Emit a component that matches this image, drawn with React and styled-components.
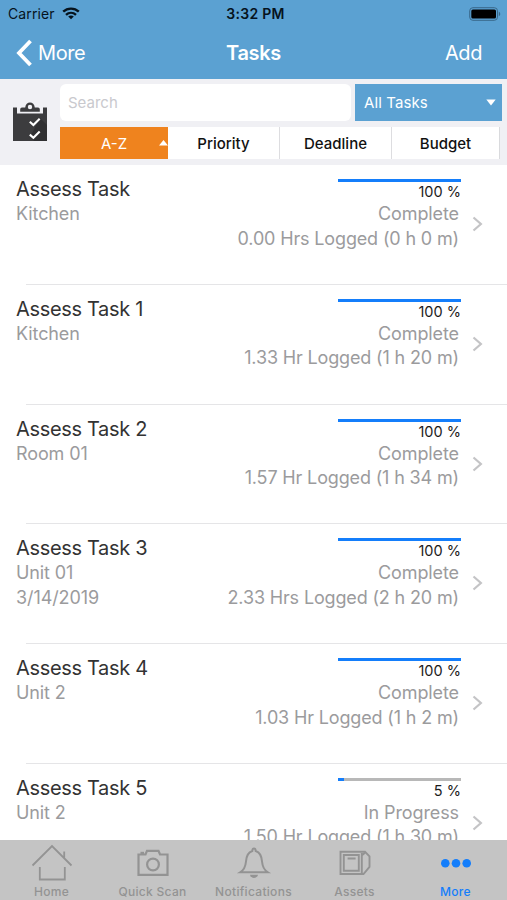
import { useState } from "react"
import styled, { createGlobalStyle } from 'styled-components';


const tasks = [
    { name: "Assess Task", place: "Kitchen", percent: 100, status: "Complete", logged: "0.00 Hrs Logged (0 h 0 m)" },
    { name: "Assess Task 1", place: "Kitchen", percent: 100, status: "Complete", logged: "1.33 Hr Logged (1 h 20 m)" },
    { name: "Assess Task 2", place: "Room 01", percent: 100, status: "Complete", logged: "1.57 Hr Logged (1 h 34 m)" },
    { name: "Assess Task 3", place: "Unit 01", date: "3/14/2019", percent: 100, status: "Complete", logged: "2.33 Hrs Logged (2 h 20 m)" },
    { name: "Assess Task 4", place: "Unit 2", percent: 100, status: "Complete", logged: "1.03 Hr Logged (1 h 2 m)" },
    { name: "Assess Task 5", place: "Unit 2", percent: 5, status: "In Progress", logged: "1.50 Hr Logged (1 h 30 m)" },
]

const sorts = ["A-Z", "Priority", "Deadline", "Budget"]


//ICONS
function WifiIcon(){
    return(
        <svg width="18" height="13" viewBox="0 0 18 13" fill="none" stroke="#06131d" strokeWidth="2.4">
            <path d="M1.2 4.7C5.6.6 12.4.6 16.8 4.7"/>
            <path d="M4 7.8c2.9-2.6 7.1-2.6 10 0"/>
            <path d="M9 12.3 6.2 9.6c1.6-1.4 4-1.4 5.6 0z" fill="#06131d" stroke="none"/>
        </svg>
    )
}

function BatteryIcon(){
    return(
        <svg width="32" height="14" viewBox="0 0 32 14">
            <rect x="0.7" y="0.7" width="27.8" height="12.6" rx="3.2" fill="none" stroke="#39688a"/>
            <rect x="2.3" y="2.4" width="24.7" height="9.2" rx="1.6" fill="#000"/>
            <path d="M29.8 4.8c1.9.7 1.9 3.7 0 4.4z" fill="#39688a"/>
        </svg>
    )
}

function ClipboardIcon(){
    return(
        <svg width="34" height="40" viewBox="0 0 34 40">
            <path d="M0 5.5h4v6h26v-6h4V39H0z" fill="#3c3c3e"/>
            <path d="M27 16l7 7v16H21l-4-4z" fill="#303032"/>
            <path d="M7.2 9.8V7.2Q7.2 5.500 9 5.500h3.200C12.600 2.300 14.500.5 17 .5s4.400 1.800 4.800 5H25q1.800 0 1.800 1.700v2.600z" fill="#3c3c3e"/>
            <circle cx="17" cy="5" r="2.200" fill="#f0f0f4"/>
            <path d="M16.800 19.800l3.600 3.200 6.300-6.200M16.800 32.600l3.600 3.200 6.300-6.200" fill="none" stroke="#fff" strokeWidth="2.100"/>
        </svg>
    )
}

function HomeIcon(){
    return(
        <svg width="42" height="38" viewBox="0 0 42 38" fill="none" stroke="currentColor" strokeWidth="1.800">
            <path d="M1.500 22.500 21 3l19.500 19.500M33.200 15V8.500M8.800 24v12.500h25V24"/>
        </svg>
    )
}

function CameraIcon(){
    return(
        <svg width="42" height="38" viewBox="0 0 42 38" fill="none" stroke="currentColor" strokeWidth="2.200">
            <path d="M6.500 11.500h7l1.500-3.600h11.500l1.500 3.600h7.500v20.300h-29z"/>
            <circle cx="21" cy="21.500" r="5.900"/>
            <path d="M8.500 9.900h3.500"/>
        </svg>
    )
}

function BellIcon(){
    return(
        <svg width="42" height="38" viewBox="0 0 42 38" fill="none" stroke="currentColor" strokeWidth="2">
            <path d="M7.200 29.300h27.600c-4-2.600-5.300-5.300-5.700-10.300C28.700 12.500 26 9 22.700 8c-.1-1.700-.8-2.400-1.700-2.400s-1.600.7-1.700 2.400C16 9 13.300 12.500 12.900 19c-.4 5-1.700 7.700-5.700 10.300z"/>
            <path d="M17 31.800h8c-.8 4.200-7.200 4.200-8 0z" fill="currentColor" stroke="none"/>
        </svg>
    )
}

function AssetsIcon(){
    return(
        <svg width="42" height="38" viewBox="0 0 42 38" fill="none" stroke="currentColor" strokeWidth="1.900">
            <path d="M6.500 8.800h24.500l4.500 4.500v10.500L29.500 31h-23z"/>
            <path d="M27.800 10v20M28 12.300l3-2.500M9.800 12h15v15.800h-15z"/>
            <path d="M13.600 15.500h8" strokeWidth="2"/>
        </svg>
    )
}

function DotsIcon(){
    return(
        <svg width="42" height="38" viewBox="0 0 42 38" fill="currentColor">
            <circle cx="10.300" cy="20.300" r="4.300"/>
            <circle cx="21" cy="20.300" r="4.300"/>
            <circle cx="31.700" cy="20.300" r="4.300"/>
        </svg>
    )
}

const tabs = [
    { label: "Home", Icon: HomeIcon },
    { label: "Quick Scan", Icon: CameraIcon },
    { label: "Notifications", Icon: BellIcon },
    { label: "Assets", Icon: AssetsIcon },
    { label: "More", Icon: DotsIcon },
]


function TaskRow({ task }){
    return(
        <Row>
            <Info>
                <TaskName>{task.name}</TaskName>
                <Detail>{task.place}</Detail>
                {task.date && <Detail>{task.date}</Detail>}
            </Info>
            <Progress>
                <Track><Fill style={{width: task.percent + "%"}}/></Track>
                <Percent>{task.percent} %</Percent>
                <Detail>{task.status}</Detail>
                <Logged>{task.logged}</Logged>
            </Progress>
            <RowArrow width="11" height="18" viewBox="0 0 11 18" fill="none" stroke="#c4c4c6" strokeWidth="2.200">
                <path d="M1.500 2.500 8.900 9l-7.400 6.500"/>
            </RowArrow>
        </Row>
    )
}


export default function App(){

    const [sort, setSort] = useState("A-Z")
    const [activeTab, setActiveTab] = useState("More")

    return(
        <>
        <GlobalStyle/>
        <Screen>
            <StatusBar>
                <Carrier>Carrier <WifiIcon/></Carrier>
                <Clock>3:32 PM</Clock>
                <BatteryIcon/>
            </StatusBar>
            <NavBar>
                <BackButton>
                    <svg width="17" height="28" viewBox="0 0 17 28" fill="none" stroke="#fff" strokeWidth="3.800">
                        <path d="M14.500 2 3 14l11.500 12"/>
                    </svg>
                    More
                </BackButton>
                <Title>Tasks</Title>
                <AddButton>Add</AddButton>
            </NavBar>
            <Filters>
                <ClipboardIcon/>
                <Controls>
                    <SearchRow>
                        <Search placeholder="Search"/>
                        <Select>
                            All Tasks
                            <svg width="10" height="7" viewBox="0 0 10 7"><path d="M.3.500h9.400L5 6.500z" fill="#fff"/></svg>
                        </Select>
                    </SearchRow>
                    <SortRow>
                        {sorts.map((name) => (
                            <SortButton key={name} $active={name === sort} onClick={() => setSort(name)}>
                                {name}
                                {name === sort && <SortArrow width="9" height="6" viewBox="0 0 9 6"><path d="M0 5.500h9L4.500 0z" fill="#fff"/></SortArrow>}
                            </SortButton>
                        ))}
                    </SortRow>
                </Controls>
            </Filters>
            <List>
                {tasks.map((task) => <TaskRow key={task.name} task={task}/>)}
            </List>
            <TabBar>
                {tabs.map(({ label, Icon }) => (
                    <Tab key={label} $active={label === activeTab} onClick={() => setActiveTab(label)}>
                        <Icon/>
                        {label}
                    </Tab>
                ))}
            </TabBar>
        </Screen>
        </>
    )
}


const GlobalStyle = createGlobalStyle`
    * {
        box-sizing: border-box;
    }
    body {
        margin: 0;
        background: #fff;
        font-family: Inter, "Liberation Sans", sans-serif;
    }
    button, input {
        font-family: inherit;
        border: 0;
        padding: 0;
        margin: 0;
        background: none;
    }
    svg {
        display: block;
        flex-shrink: 0;
    }
`

const Screen = styled.div`
    width: 507px;
    height: 900px;
    display: flex;
    flex-direction: column;
    overflow: hidden;
`

//HEADER
const StatusBar = styled.div`
    height: 27px;
    flex-shrink: 0;
    background: #5ba1d2;
    display: grid;
    grid-template-columns: 1fr auto 1fr;
    align-items: center;
    padding: 0 6px 0 8px;
    font-size: 14px;
    color: #06131d;
    > :last-child {
        justify-self: end;
    }
`
const Carrier = styled.div`
    display: flex;
    align-items: center;
    gap: 7px;
    letter-spacing: 0.1px;
`
const Clock = styled.div`
    font-weight: 600;
    letter-spacing: 0.3px;
    padding-left: 2px;
`
const NavBar = styled.div`
    height: 52px;
    flex-shrink: 0;
    background: #5ba1d2;
    color: #fff;
    display: grid;
    grid-template-columns: 1fr auto 1fr;
    align-items: center;
    padding: 0 25px 0 16px;
`
const BackButton = styled.button`
    display: flex;
    align-items: center;
    gap: 5px;
    color: #fff;
    font-size: 20px;
    letter-spacing: -0.4px;
`
const Title = styled.div`
    font-size: 20px;
    font-weight: 600;
    letter-spacing: -0.3px;
    padding-left: 9px;
`
const AddButton = styled.button`
    justify-self: end;
    color: #fff;
    font-size: 20px;
    letter-spacing: -0.4px;
`

//FILTERS
const Filters = styled.div`
    height: 86px;
    flex-shrink: 0;
    background: #f0f0f4;
    display: flex;
    padding: 5px 5px 0 13px;
    gap: 13px;
    > svg {
        margin-top: 18px;
    }
`
const Controls = styled.div`
    flex: 1;
    min-width: 0;
    display: flex;
    flex-direction: column;
    gap: 6px;
`
const SearchRow = styled.div`
    display: flex;
    gap: 4px;
    height: 37px;
`
const Search = styled.input`
    width: 291px;
    border-radius: 6px;
    background: #fff;
    padding: 0 8px;
    font-size: 15px;
    outline: none;
    &::placeholder {
        color: #c9c9ce;
        opacity: 1;
    }
`
const Select = styled.button`
    flex: 1;
    display: flex;
    align-items: center;
    justify-content: space-between;
    padding: 0 6px 0 9px;
    background: #5ba1d2;
    color: #fff;
    font-size: 15px;
    letter-spacing: 0.1px;
`
const SortRow = styled.div`
    display: grid;
    grid-template-columns: 108px 111px 112px 108px;
    height: 32px;
    background: #fff;
    width: 440px;
    border-right: 1px solid #d9dadd;
`
const SortButton = styled.button`
    position: relative;
    font-size: 15px;
    font-weight: ${ props => props.$active ? 400 : 500 };
    color: ${ props => props.$active ? "#fff" : "#111" };
    background: ${ props => props.$active ? "#ef831e" : "#fff" };
    & + & + & {
        border-left: 1px solid #dddde0;
    }
`
const SortArrow = styled.svg`
    position: absolute;
    right: 0;
    top: 13px;
`

//LIST
const List = styled.div`
    flex: 1;
    min-height: 0;
    overflow: hidden;
`
const Row = styled.div`
    height: 119.75px;
    display: flex;
    padding: 0 24px 0 16px;
    background: linear-gradient(#e5e5e7, #e5e5e7) 26px 100% / 100% 1px no-repeat;
`
const Info = styled.div`
    flex: 1;
    padding-top: 11px;
`
const TaskName = styled.div`
    font-size: 20px;
    line-height: 26px;
    letter-spacing: -0.33px;
    color: #333;
`
const Detail = styled.div`
    font-size: 18px;
    line-height: 24.5px;
    letter-spacing: -0.1px;
    color: #9b9b9d;
    white-space: nowrap;
`
const Logged = styled(Detail)`
    letter-spacing: -0.15px;
`
const Progress = styled.div`
    display: flex;
    flex-direction: column;
    align-items: flex-end;
    padding-top: 14px;
    ${Detail} {
        margin-right: 2px;
    }
`
const Track = styled.div`
    width: 123px;
    height: 3px;
    background: #b8b8b8;
`
const Fill = styled.div`
    height: 100%;
    background: #147efb;
`
const Percent = styled.div`
    font-size: 14.5px;
    line-height: 19px;
    height: 20px;
    color: #1c1c1c;
`
const RowArrow = styled.svg`
    margin: 50px 0 0 11px;
`

//TABS
const TabBar = styled.div`
    height: 60px;
    flex-shrink: 0;
    background: #c4c4c4;
    display: grid;
    grid-template-columns: repeat(5, 101px);
    padding-left: 1px;
`
const Tab = styled.button`
    display: flex;
    flex-direction: column;
    align-items: center;
    gap: 3px;
    padding-top: 3px;
    font-size: 12px;
    line-height: 15px;
    font-weight: 500;
    letter-spacing: 0.3px;
    color: ${ props => props.$active ? "#147efb" : "#939393" };
`
